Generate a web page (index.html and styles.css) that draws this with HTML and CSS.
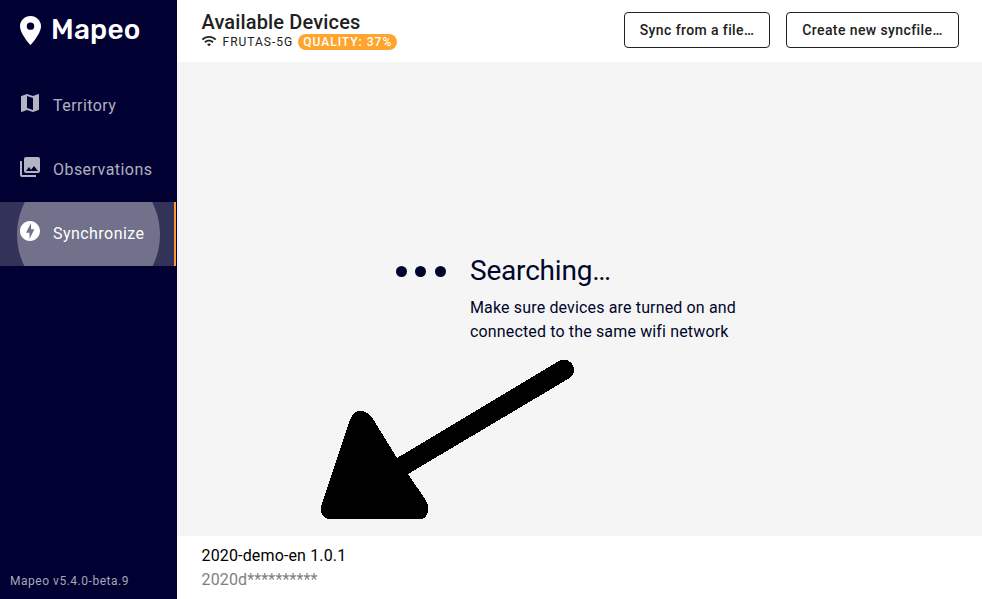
FILE: index.html
```html
<!DOCTYPE html>
<html lang="en">
<head>
<meta charset="utf-8">
<title>Mapeo</title>
<link rel="stylesheet" href="styles.css">
</head>
<body>
<div class="app">
  <aside class="sidebar">
    <div class="logo">
      <svg class="logo-pin" viewBox="5 2 14 20" preserveAspectRatio="none"><path d="M12 2C8.13 2 5 5.13 5 9c0 5.25 7 13 7 13s7-7.750 7-13c0-3.870-3.130-7-7-7zm0 9.500a2.500 2.500 0 0 1 0-5 2.500 2.500 0 0 1 0 5z"/></svg>
      <span class="logo-text">Mapeo</span>
    </div>
    <nav class="nav">
      <a class="tab"><svg class="tab-icon" viewBox="0 0 24 24"><path d="M20.500 3l-.160.030L15 5.100 9 3 3.360 4.900c-.210.070-.360.250-.360.480V20.500c0 .280.220.500.500.500l.160-.030L9 18.900l6 2.100 5.640-1.900c.210-.070.360-.250.360-.480V3.500c0-.280-.220-.500-.500-.500zM15 19l-6-2.110V5l6 2.110V19z"/></svg><span>Territory</span></a>
      <a class="tab"><svg class="tab-icon" viewBox="0 0 24 24"><path d="M22 16V4c0-1.100-.900-2-2-2H8c-1.100 0-2 .900-2 2v12c0 1.100.900 2 2 2h12c1.100 0 2-.900 2-2zm-11-4l2.030 2.710L16 11l4 5H8l3-4zM2 6v14c0 1.100.900 2 2 2h14v-2H4V6H2z"/></svg><span>Observations</span></a>
      <a class="tab active"><span class="ripple"></span><svg class="tab-icon" viewBox="0 0 24 24"><path d="M12 2.020c-5.510 0-9.980 4.470-9.980 9.980s4.470 9.980 9.980 9.980 9.980-4.470 9.980-9.980S17.510 2.020 12 2.020zM11.480 20v-6.260H8L13 4v6.260h3.350L11.480 20z"/></svg><span>Synchronize</span></a>
    </nav>
    <div class="version">Mapeo v5.4.0-beta.9</div>
  </aside>
  <main class="main">
    <header class="header">
      <div class="heading">
        <h1>Available Devices</h1>
        <div class="network">
          <svg class="wifi" viewBox="0 0 24 24"><path d="M1 9l2 2c4.970-4.970 13.030-4.970 18 0l2-2C16.930 2.930 7.080 2.930 1 9zm8 8l3 3 3-3c-1.650-1.660-4.340-1.660-6 0zm-4-4l2 2c2.760-2.760 7.240-2.760 10 0l2-2C15.140 9.140 8.870 9.140 5 13z"/></svg>
          <span class="ssid">FRUTAS-5G</span>
          <span class="quality">QUALITY: 37%</span>
        </div>
      </div>
      <button class="button sync">Sync from a file…</button>
      <button class="button create">Create new syncfile…</button>
    </header>
    <section class="content">
      <div class="searching">
        <div class="dots"><i></i><i></i><i></i></div>
        <div>
          <h2>Searching…</h2>
          <p>Make sure devices are turned on and<br>connected to the same wifi network</p>
        </div>
      </div>
      <svg class="arrow" viewBox="310 350 280 180" shape-rendering="crispEdges"><path d="M360.500 411C366 411 370 414 373 419L397 458L559 361C567 357 574 363 574 370C574 374 572 377 568 379L408 474L425 499C428 504 429 508 428 512Q426 519 420 519H329Q323 518 321 512L321 507L350 420Q353 411 360.500 411Z"/></svg>
    </section>
    <footer class="footer">
      <div>2020-demo-en 1.0.1</div>
      <div class="key">2020d**********</div>
    </footer>
  </main>
</div>
</body>
</html>
```
FILE: styles.css
```css
* { box-sizing: border-box; }
body { margin: 0; font-family: Roboto, sans-serif; }
h1, h2, p { margin: 0; }
.app { display: flex; width: 982px; height: 599px; overflow: hidden; }
.sidebar { display: flex; flex-direction: column; width: 177px; background: #000033; color: #fff; }
.logo { display: flex; align-items: center; height: 60px; padding-left: 20px; gap: 10px; }
.logo-pin { width: 21px; height: 29px; fill: #fff; }
.logo-text { font-family: Rubik, Roboto, sans-serif; font-size: 28px; font-weight: 500; letter-spacing: .2px; line-height: 32px; }
.nav { padding-top: 14px; }
.tab { position: relative; display: flex; align-items: center; height: 64px; padding: 0 0 2px 18px; overflow: hidden; font-size: 16px; letter-spacing: .45px; color: rgba(255,255,255,.7); }
.tab-icon { position: relative; width: 24px; height: 24px; margin: 0 11px 5px 0; flex: none; fill: currentColor; }
.tab span:last-child { position: relative; }
.tab.active { color: #fff; background: #333359; border-right: 2px solid #ff9933; margin-right: 1px; }
.ripple { position: absolute; left: 17px; top: -39px; width: 143px; height: 143px; border-radius: 50%; background: #71718b; }
.version { margin-top: auto; padding: 0 0 9px 10px; font-size: 12px; line-height: 17px; letter-spacing: .52px; color: #a6a6b5; }
.main { display: flex; flex: 1; min-width: 0; flex-direction: column; background: #fff; }
.header { display: flex; flex: none; height: 62px; padding: 12px 23px 0 24.5px; gap: 16px; color: #212121; }
.heading { flex: 1; }
h1 { font-size: 20px; font-weight: 500; line-height: 20px; letter-spacing: .15px; }
.network { display: flex; align-items: center; height: 16px; margin-top: 2px; font-size: 12px; letter-spacing: 1px; white-space: nowrap; }
.wifi { width: 16px; height: 16px; margin: 0 5.5px 2px -.5px; fill: #212121; }
.quality { height: 16px; margin-left: 5px; padding: 0 5px; border-radius: 8px; background: #ffa42d; color: #fff; font-weight: 500; line-height: 16px; }
.button { height: 36px; padding: 0; border: 1px solid #212121; border-radius: 4px; background: #fff; color: #212121; font: 500 14px/20px Roboto, sans-serif; letter-spacing: .4px; }
.sync { width: 146px; }
.create { width: 173px; }
.content { position: relative; flex: none; height: 474px; padding: 192px 0 0 219px; background: #f5f5f5; color: #00052b; }
.searching { display: flex; }
.dots { display: flex; width: 74px; padding-top: 12px; gap: 8px; }
.dots i { width: 11px; height: 11px; border-radius: 50%; background: #00052b; }
.dots i:last-child { margin-left: 1px; }
h2 { font-size: 28px; font-weight: 400; line-height: 33px; letter-spacing: -.2px; }
.searching p { margin-top: 9px; font-size: 16px; line-height: 24px; letter-spacing: .15px; white-space: nowrap; }
.arrow { position: absolute; left: 133px; top: 288px; width: 280px; height: 180px; }
.footer { padding: 8px 24.5px 7px; font-size: 16px; line-height: 24px; letter-spacing: .15px; color: #000; }
.key { color: #808080; }
```
